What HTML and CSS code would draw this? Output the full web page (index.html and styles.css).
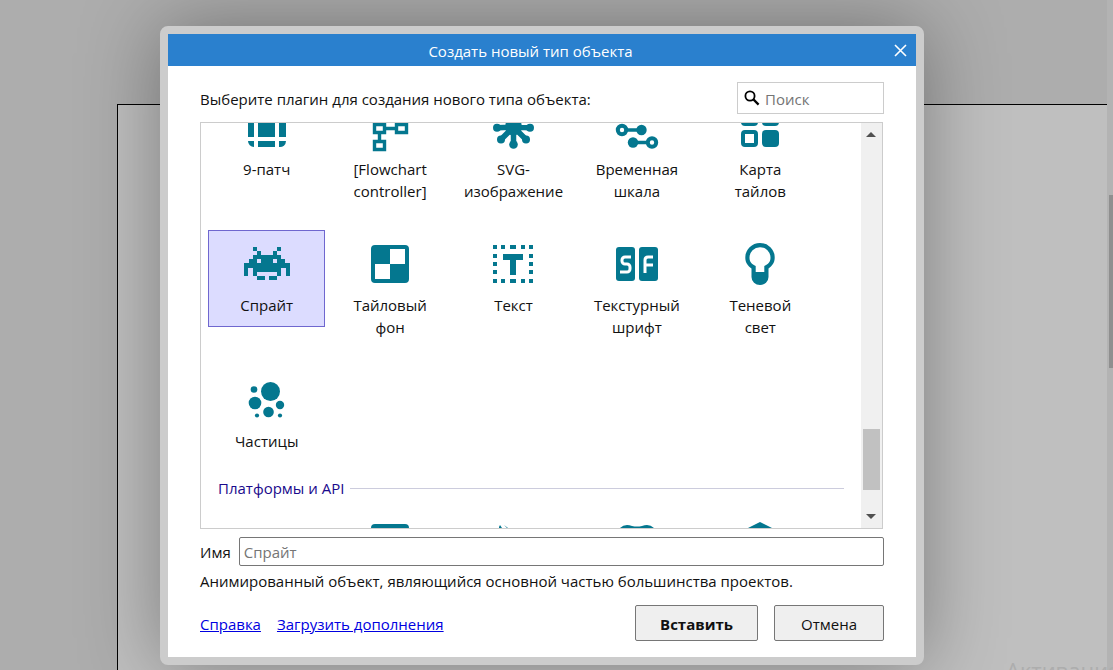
FILE: index.html
```html
<!DOCTYPE html>
<html lang="ru">
<head>
<meta charset="utf-8">
<title>Создать новый тип объекта</title>
<link rel="stylesheet" href="styles.css">
</head>
<body>
<main class="workspace">
  <div class="layout-sheet"></div>
  <div class="page-scroll"><div class="page-thumb"></div></div>
</main>
<div class="watermark">Активация</div>

<section class="dialog" role="dialog" aria-labelledby="dialog-title">
  <header class="titlebar">
    <h1 class="title" id="dialog-title">Создать новый тип объекта</h1>
    <button class="close" type="button"><svg width="13" height="13" viewBox="0 0 13 13"><path d="M1 1L12 12M12 1L1 12" stroke="#fff" stroke-width="1.6" fill="none"/></svg></button>
  </header>
  <form class="content">
    <div class="top-row">
      <label class="prompt" for="search">Выберите плагин для создания нового типа объекта:</label>
      <div class="search">
        <svg class="search-icon" width="16" height="16" viewBox="0 0 16 16"><circle cx="6" cy="6" r="4.6" fill="none" stroke="#000" stroke-width="1.8"/><path d="M9.4 9.4L14.600 14.600" stroke="#000" stroke-width="2.200"/></svg>
        <input class="search-input" id="search" type="text" placeholder="Поиск">
      </div>
    </div>

    <div class="list">
      <div class="list-view">
        <div class="list-content">
          <div class="grid">
            <button class="item" type="button">
              <svg class="icon" viewBox="0 0 48 48"><path d="M11 5h2v9H5v-3a6 6 0 0 1 6-6zM16 5h16v9H16zM35 5h2a6 6 0 0 1 6 6v3h-8zM5 17h6v16H5zM15 17h17v16H15zM36 17h7v16h-7zM5 37h6v6a6 6 0 0 1-6-6zM15 37h17v6H15zM36 37h7a6 6 0 0 1-7 6z"/></svg>
              <span class="name">9-патч</span>
            </button>
            <button class="item" type="button">
              <svg class="icon line" viewBox="0 0 48 48"><path d="M8.500 20.500h10v8h-10zM30.500 20.500h10v8h-10zM8.500 37.500h10v8h-10zM19 24.500h11M13.500 29v8" stroke-width="3.400"/></svg>
              <span class="name">[Flowchart controller]</span>
            </button>
            <button class="item" type="button">
              <svg class="icon line round" viewBox="0 0 48 48"><path d="M24.500 23V7M24.500 23V41M24.500 23L8 23.700M24.500 23L41 23.700M24.500 23L12 35.500M24.500 23L37 35.500M24.500 23L12 11M24.500 23L37 11" stroke-width="5.500"/><g class="solid"><circle cx="24.500" cy="23" r="8.500"/><circle cx="8" cy="23.700" r="4"/><circle cx="41" cy="23.700" r="4"/><circle cx="12" cy="35.500" r="4"/><circle cx="37" cy="35.500" r="4"/><circle cx="24.500" cy="40.500" r="4.300"/><circle cx="24.500" cy="7" r="4"/></g></svg>
              <span class="name">SVG-<br>изображение</span>
            </button>
            <button class="item" type="button">
              <svg class="icon line" viewBox="0 0 48 48"><circle cx="9" cy="26" r="4.200" stroke-width="4"/><circle cx="39" cy="38.500" r="4.200" stroke-width="4"/><path d="M13 26h15M20 38.500h15" stroke-width="3.400"/><g class="solid"><circle cx="28.500" cy="26" r="5.200"/><circle cx="20" cy="38.500" r="5.200"/></g></svg>
              <span class="name">Временная шкала</span>
            </button>
            <button class="item" type="button">
              <svg class="icon" viewBox="0 0 48 48"><rect x="5" y="5" width="17" height="17" rx="4"/><rect x="26" y="5" width="17" height="17" rx="4"/><rect x="26" y="26" width="17" height="17" rx="4"/><path fill-rule="evenodd" d="M9 26h9a4 4 0 0 1 4 4v9a4 4 0 0 1-4 4H9a4 4 0 0 1-4-4v-9a4 4 0 0 1 4-4zM9 30v9h9v-9z"/></svg>
              <span class="name">Карта<br>тайлов</span>
            </button>

            <button class="item selected" type="button">
              <svg class="icon" viewBox="0 0 48 48"><path fill-rule="evenodd" d="M10 7h4v4h4v4h12v-4h4V7h4v4h-4v4h4v4h4v4h5v13h-4v-8h-5v8h-4v-4H14v4h-4v-8H5v8H1V23h5v-4h4v-4h4v-4h-4zM14 19v4h4v-4zM30 19v4h4v-4zM14 36h8v4h-8zM26 36h8v4h-8z"/></svg>
              <span class="name">Спрайт</span>
            </button>
            <button class="item" type="button">
              <svg class="icon" viewBox="0 0 48 48"><path fill-rule="evenodd" d="M9 5h30a4 4 0 0 1 4 4v30a4 4 0 0 1-4 4H9a4 4 0 0 1-4-4V9a4 4 0 0 1 4-4zM24 9v15H9v15h15V24h15V9z"/></svg>
              <span class="name">Тайловый<br>фон</span>
            </button>
            <button class="item" type="button">
              <svg class="icon" viewBox="0 0 48 48"><path d="M14 14h20v6h-7v15h-6V20h-7zM4 5h4v4H4zM12 5h4v4h-4zM21 5h6v4h-6zM32 5h4v4h-4zM40 5h4v4h-4zM4 14h4v4H4zM4 22h4v4H4zM4 30h4v4H4zM40 14h4v4h-4zM40 22h4v4h-4zM40 30h4v4h-4zM4 39h4v4H4zM12 39h4v4h-4zM21 39h6v4h-6zM32 39h4v4h-4zM40 39h4v4h-4z"/></svg>
              <span class="name">Текст</span>
            </button>
            <button class="item" type="button">
              <svg class="icon" viewBox="0 0 48 48"><rect x="3" y="7" width="19" height="34" rx="3"/><rect x="26" y="7" width="19" height="34" rx="3"/><path class="cut" d="M18 17h-6a3 3 0 0 0-3 3v1a3 3 0 0 0 3 3h2a3 3 0 0 1 3 3v2a3 3 0 0 1-3 3H7M32 33V20q0-3 3-3h5M32 25h8"/></svg>
              <span class="name">Текстурный шрифт</span>
            </button>
            <button class="item" type="button">
              <svg class="icon" viewBox="0 0 48 48"><path fill-rule="evenodd" d="M24 3a14.700 14.700 0 0 1 14.700 14.700c0 5-2.700 8.300-6.200 10.800V37a8.500 8 0 0 1-17 0v-8.500c-3.500-2.500-6.200-5.800-6.200-10.800A14.700 14.700 0 0 1 24 3zM24 7.200a10.500 10.500 0 0 0-10.500 10.500c0 4 2.300 6.500 6.200 8.300V32h8.600v-6c3.900-1.800 6.200-4.300 6.200-8.300A10.500 10.500 0 0 0 24 7.200z"/></svg>
              <span class="name">Теневой<br>свет</span>
            </button>

            <button class="item" type="button">
              <svg class="icon" viewBox="0 0 48 48"><circle cx="27.500" cy="15.500" r="9.500"/><circle cx="11" cy="13.500" r="3.300"/><circle cx="12" cy="27" r="6.300"/><circle cx="37" cy="29" r="4.200"/><circle cx="25.500" cy="36" r="5.300"/><circle cx="14" cy="39.500" r="2.100"/><circle cx="37" cy="39.500" r="2.100"/></svg>
              <span class="name">Частицы</span>
            </button>
          </div>
          <h2 class="section"><span>Платформы и API</span></h2>
          <div class="grid">
            <div class="item"></div>
            <div class="item"><svg class="icon" viewBox="0 0 48 48"><rect x="5" y="5" width="38" height="38" rx="4"/></svg></div>
            <div class="item"><svg class="icon" viewBox="0 0 48 48"><path d="M10 8l1-2 2 3h-3zM15 6l4 3h-1z"/></svg></div>
            <div class="item"><svg class="icon" viewBox="0 0 48 48"><path d="M7 9q5-5 12-2q5 1 10 0q7-3 12 2v10H7z"/></svg></div>
            <div class="item"><svg class="icon" viewBox="0 0 48 48"><path d="M24 3L42 12v23L24 45L6 35V12z"/></svg></div>
          </div>
        </div>
      </div>
      <div class="scrollbar">
        <svg width="10" height="5" viewBox="0 0 10 5"><path d="M5 0L10 5H0z" fill="#505050"/></svg>
        <div class="thumb"></div>
        <svg width="10" height="5" viewBox="0 0 10 5"><path d="M0 0H10L5 5z" fill="#505050"/></svg>
      </div>
    </div>

    <div class="name-row">
      <label for="name">Имя</label>
      <input class="name-input" id="name" type="text" placeholder="Спрайт">
    </div>
    <p class="description">Анимированный объект, являющийся основной частью большинства проектов.</p>
    <footer class="footer">
      <a href="#">Справка</a>
      <a href="#">Загрузить дополнения</a>
      <button class="action primary" type="button">Вставить</button>
      <button class="action" type="button">Отмена</button>
    </footer>
  </form>
</section>
</body>
</html>
```

FILE: styles.css
```css
* { box-sizing: border-box; }
html, body { height: 100%; }
body {
  margin: 0;
  overflow: hidden;
  background: #adadad;
  color: #111;
  font: 15px/22px "Open Sans", "Noto Sans", sans-serif;
}
button, input { font: inherit; color: inherit; }

.workspace { display: flex; height: 100vh; }
.layout-sheet {
  flex: 1;
  margin: 104px 0 0 117px;
  border: solid #000;
  border-width: 1px 0 0 1px;
  background: #bfbfbf;
}
.page-scroll { width: 6px; padding: 195px 0 0 2px; background: #b3b3b3; }
.page-thumb { height: 173px; background: #8f8f8f; }
.watermark {
  position: absolute;
  left: 1006px;
  top: 656px;
  color: #adadad;
  font-size: 22px;
  line-height: 28px;
}

.dialog {
  position: absolute;
  top: 26px;
  left: 160px;
  right: 189px;
  border: 8px solid #ccc;
  border-radius: 8px;
  background: #fff;
  box-shadow: 0 0 80px rgba(0, 0, 0, .35);
}
.titlebar {
  display: flex;
  align-items: center;
  height: 32px;
  padding-right: 8px;
  background: #2a80ce;
  color: #fff;
}
.title { flex: 1; margin: 0; padding-top: 2px; font-size: 15px; font-weight: 400; text-align: center; }
.close { display: flex; padding: 1px; border: 0; background: none; }

.content { display: flex; flex-direction: column; padding: 16px 32px; }
.top-row { display: flex; align-items: center; justify-content: space-between; height: 32px; }
.prompt { padding-top: 2px; }
.search {
  display: flex;
  align-items: center;
  gap: 5px;
  width: 147px;
  height: 32px;
  padding: 0 6px;
  border: 1px solid #ccc;
}
.search-icon { flex: none; }
.search-input { flex: 1; min-width: 0; padding: 2px 0 0; border: 0; outline: 0; background: none; }
::placeholder { color: #757575; opacity: 1; }

.list { display: flex; height: 407px; margin: 8px 1px 8px 0; border: 1px solid #ccc; }
.list-view { flex: 1; overflow: hidden; }
.list-content { margin-top: -29px; }
.grid {
  display: grid;
  grid-template-columns: repeat(5, minmax(0, 1fr));
  align-items: start;
  gap: 17px 6px;
  padding: 0 42px 0 7px;
}
.item {
  display: flex;
  flex-direction: column;
  align-items: center;
  gap: 6px;
  padding: 9px 4px 10px;
  border: 1px solid transparent;
  background: none;
  text-align: center;
}
.selected { border-color: #6f67cf; background: #dcdcff; }
.icon { width: 48px; height: 48px; fill: #04778f; }
.line { fill: none; stroke: #04778f; }
.round { stroke-linecap: round; }
.solid { fill: #04778f; stroke: none; }
.cut { fill: none; stroke: #fff; stroke-width: 3; }
.section {
  display: flex;
  align-items: center;
  gap: 6px;
  margin: 14px 17px 10px;
  color: #1a0a8c;
  font-size: 15px;
  font-weight: 400;
}
.section::after { content: ""; flex: 1; height: 1px; background: #ccd; }
.scrollbar {
  display: flex;
  flex-direction: column;
  align-items: center;
  width: 21px;
  padding: 9px 2px 9px 1px;
  background: #f0f0f0;
}
.thumb { width: 17px; height: 61px; margin: auto 0 24px; background: #c1c1c1; }

.name-row { display: flex; align-items: center; gap: 8px; }
.name-input { flex: 1; height: 29px; padding: 0 4px; border: 1px solid #767676; border-radius: 2px; }
.description { margin: 4px 0 13px; }
.footer { display: flex; align-items: center; gap: 16px; }
.footer a { padding-top: 2px; color: #0000e0; }
.action {
  width: 110px;
  height: 36px;
  padding: 2px 8px 0;
  border: 1px solid #767676;
  border-radius: 2px;
  background: #efefef;
}
.primary { width: 123px; margin-left: auto; font-weight: 700; }
```
